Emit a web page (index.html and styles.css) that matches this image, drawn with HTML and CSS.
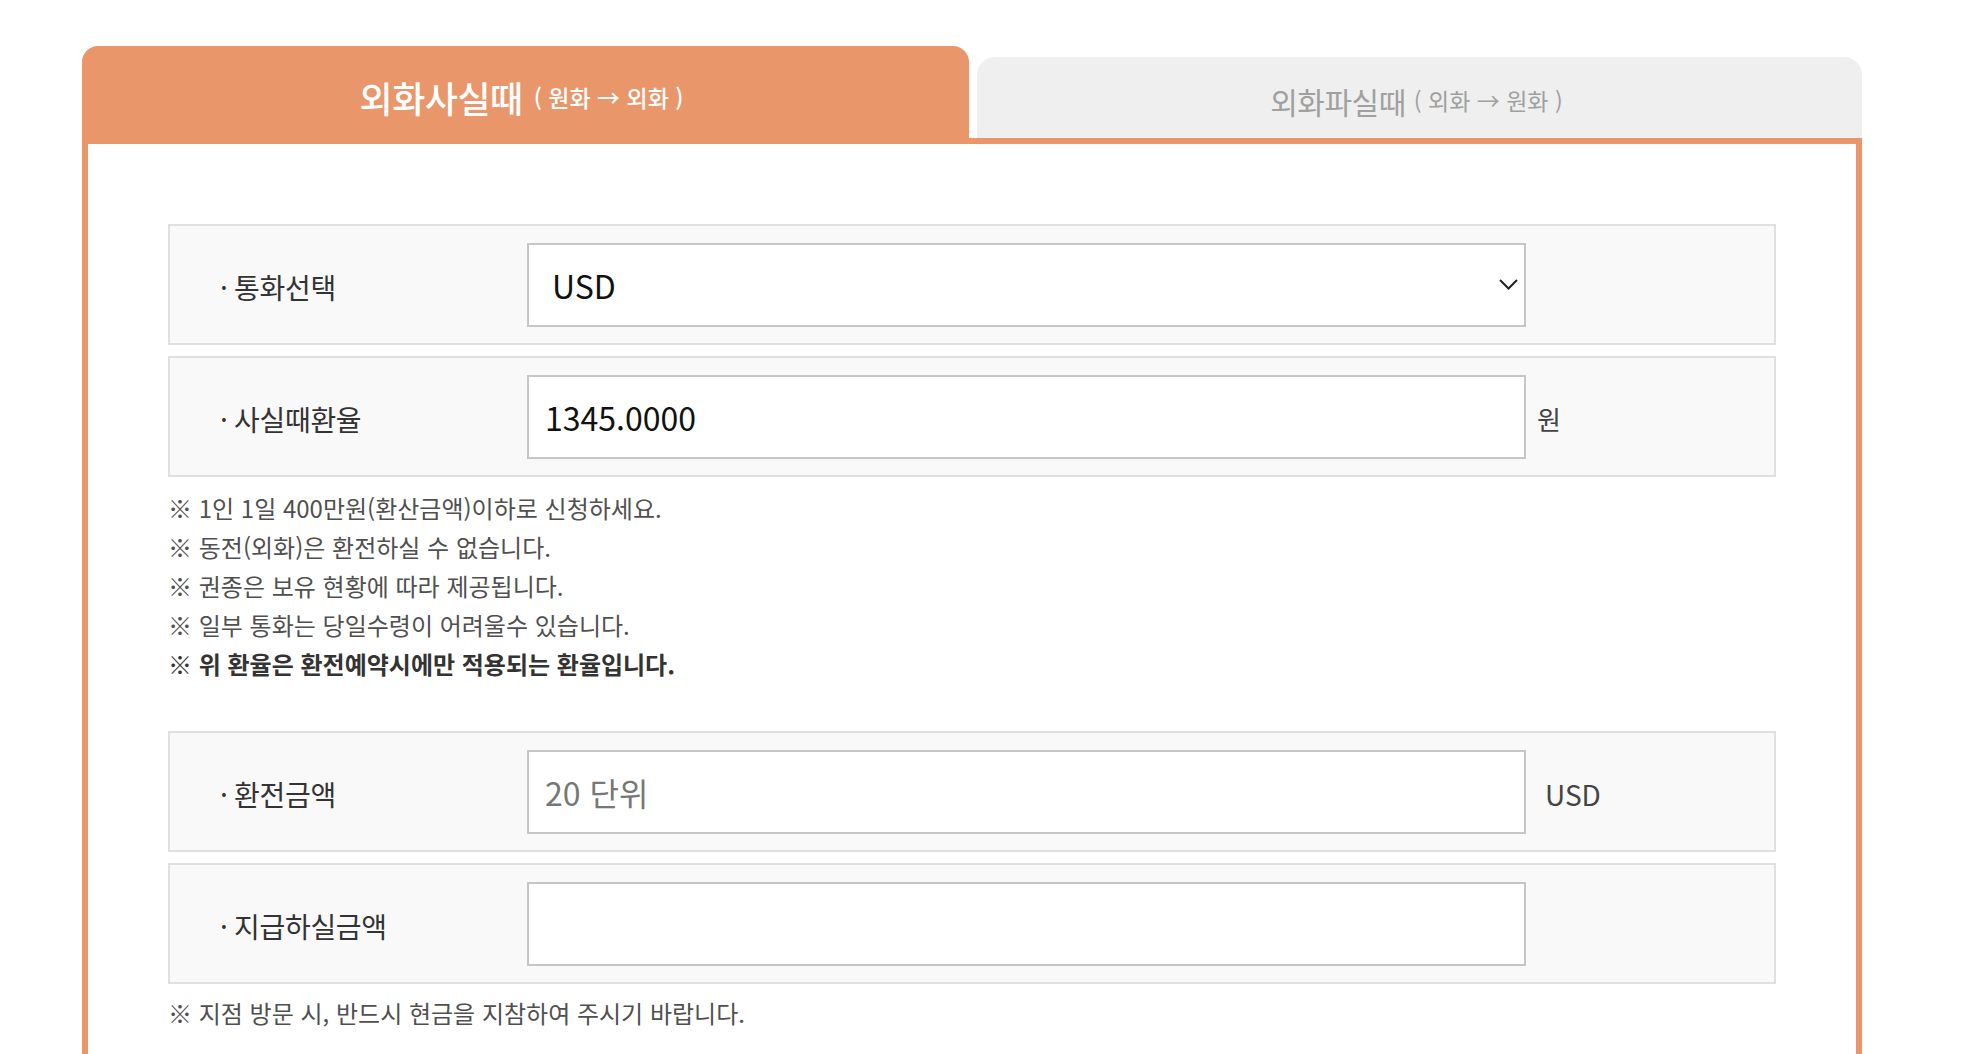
FILE: index.html
```html
<!DOCTYPE html>
<html lang="ko">
<head>
<meta charset="utf-8">
<title>외화사실때</title>
<link rel="stylesheet" href="styles.css">
</head>
<body>
<div class="wrap">
  <div class="tabs">
    <div class="tab tab--active"><span class="tab-title">외화사실때</span><span class="tab-sub">( 원화 → 외화 )</span></div>
    <div class="tab tab--idle"><span class="tab-title">외화파실때</span><span class="tab-sub">( 외화 → 원화 )</span></div>
  </div>
  <div class="panel">
    <div class="row">
      <div class="label"><span class="bullet">·</span>통화선택</div>
      <div class="field">
        <select class="control control--select"><option>USD</option></select>
        <svg class="chev" width="19" height="11" viewBox="0 0 19 11"><polyline points="1,1 9.5,9.5 18,1" fill="none" stroke="#222" stroke-width="2"/></svg>
      </div>
    </div>
    <div class="row">
      <div class="label"><span class="bullet">·</span>사실때환율</div>
      <div class="field"><input class="control" type="text" value="1345.0000"></div>
      <div class="unit">원</div>
    </div>
    <ul class="notes">
      <li>※ 1인 1일 400만원(환산금액)이하로 신청하세요.</li>
      <li>※ 동전(외화)은 환전하실 수 없습니다.</li>
      <li>※ 권종은 보유 현황에 따라 제공됩니다.</li>
      <li>※ 일부 통화는 당일수령이 어려울수 있습니다.</li>
      <li class="notes-strong">※ 위 환율은 환전예약시에만 적용되는 환율입니다.</li>
    </ul>
    <div class="row row--gap">
      <div class="label"><span class="bullet">·</span>환전금액</div>
      <div class="field"><input class="control" type="text" placeholder="20 단위"></div>
      <div class="unit unit--cur">USD</div>
    </div>
    <div class="row">
      <div class="label"><span class="bullet">·</span>지급하실금액</div>
      <div class="field"><input class="control" type="text"></div>
    </div>
    <ul class="notes notes--last">
      <li>※ 지점 방문 시, 반드시 현금을 지참하여 주시기 바랍니다.</li>
    </ul>
  </div>
</div>
</body>
</html>
```

FILE: styles.css
```css
* { box-sizing: border-box; }
html, body { margin: 0; padding: 0; background: #fff; }
body {
  font-family: "Noto Sans CJK KR", "Noto Sans", sans-serif;
  color: #333;
}
.wrap {
  width: 1780px;
  margin: 46px 0 0 82px;
}
.tabs {
  display: flex;
  align-items: flex-end;
}
.tab {
  flex: 1 1 0;
  display: flex;
  align-items: center;
  justify-content: center;
  white-space: nowrap;
}
.tab + .tab { margin-left: 8px; }
.tab--active {
  height: 92px;
  padding-top: 10px;
  padding-right: 8px;
  background: #e8966a;
  color: #fff;
  border-radius: 16px 16px 0 0;
}
.tab--active .tab-title { font-size: 36px; font-weight: 500; letter-spacing: -0.5px; }
.tab--active .tab-sub { font-size: 23px; font-weight: 500; margin-left: 11px; }
.tab--idle {
  height: 81px;
  padding-top: 6px;
  padding-right: 6px;
  background: #efefef;
  color: #a0a0a0;
  border-radius: 18px 18px 0 0;
}
.tab--idle .tab-title { font-size: 30px; font-weight: 400; letter-spacing: -0.5px; }
.tab--idle .tab-sub { font-size: 23px; font-weight: 400; margin-left: 8px; }
.tab-title, .tab-sub { line-height: 1; }

.panel {
  border: 6px solid #e8966a;
  padding: 80px 80px 80px 80px;
}
.row {
  display: flex;
  align-items: center;
  height: 121px;
  background: #f9f9f9;
  border: 2px solid #e0e0e0;
  margin-bottom: 11px;
}
.row--gap { margin-top: 48px; }
.label {
  width: 357px;
  padding-left: 50px;
  padding-top: 4px;
  font-size: 28px;
  color: #333;
  letter-spacing: -0.3px;
  white-space: nowrap;
}
.bullet {
  display: inline-block;
  width: 14px;
}
.field {
  position: relative;
  width: 999px;
  height: 84px;
}
.control {
  width: 100%;
  height: 100%;
  margin: 0;
  border: 2px solid #c6c6c6;
  background: #fff;
  padding: 0 16px;
  font-family: "Noto Sans CJK KR", "Noto Sans", sans-serif;
  font-size: 32px;
  color: #111;
  border-radius: 0;
  outline: none;
}
.control::placeholder { color: #777; }
.control--select {
  -webkit-appearance: none;
  appearance: none;
  padding-left: 23px;
}
.chev {
  position: absolute;
  right: 8px;
  top: 36px;
  pointer-events: none;
}
.unit {
  margin-left: 11px;
  padding-top: 4px;
  font-size: 26px;
  color: #444;
}
.unit--cur {
  margin-left: 19px;
  font-size: 28px;
}
.notes {
  list-style: none;
  margin: 0;
  padding: 0;
  font-size: 24px;
  line-height: 39px;
  color: #505050;
}
.notes-strong { font-weight: 700; color: #333; }
.notes--last { margin-top: -2px; }
```
